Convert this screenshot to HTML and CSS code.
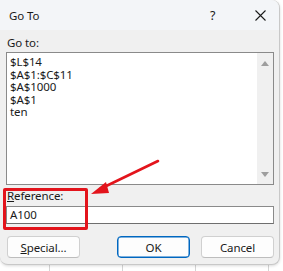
FILE: index.html
```html
<!DOCTYPE html>
<html>
<head>
<meta charset="utf-8">
<link rel="stylesheet" href="styles.css">
</head>
<body>
<div class="sheet">
  <div class="dialog">
    <div class="titlebar">
      <span class="title">Go To</span>
      <span class="help">?</span>
      <span class="close">
        <svg width="11" height="11" viewBox="0 0 11 11"><path d="M0.5 0.5 L10.5 10.5 M10.5 0.5 L0.5 10.5" stroke="#1a1a1a" stroke-width="1.1" fill="none"/></svg>
      </span>
    </div>
    <div class="content">
      <div class="label">Go to:</div>
      <div class="listbox">
        <div class="items">
          <div>$L$14</div>
          <div>$A$1:$C$11</div>
          <div>$A$1000</div>
          <div>$A$1</div>
          <div>ten</div>
        </div>
        <div class="scrollbar">
          <span class="tri up"></span>
          <span class="tri down"></span>
        </div>
      </div>
      <div class="label ref-label"><u>R</u>eference:</div>
      <div class="input">A100</div>
      <div class="buttons">
        <button class="btn"><u>S</u>pecial...</button>
        <div class="spacer"></div>
        <button class="btn primary">OK</button>
        <button class="btn">Cancel</button>
      </div>
    </div>
    <div class="highlight"></div>
    <svg class="arrow" width="80" height="50" viewBox="0 0 80 50">
      <line x1="70" y1="3" x2="12" y2="31" stroke="#e3141c" stroke-width="2.6" stroke-linecap="round"/>
      <polygon points="3,36 18,24 21,35" fill="#e3141c"/>
    </svg>
  </div>
</div>
</body>
</html>
```

FILE: styles.css
```css
* { box-sizing: border-box; }
html, body { margin: 0; padding: 0; }
body {
  width: 283px;
  height: 271px;
  overflow: hidden;
  font-family: "Segoe UI", "Noto Sans", "Open Sans", sans-serif;
  font-size: 11px;
  letter-spacing: -0.1px;
  color: #1a1a1a;
}
.sheet {
  width: 283px;
  height: 271px;
  background-color: #ffffff;
  background-image:
    repeating-linear-gradient(to right, transparent 0, transparent 49px, #d4d4d4 49px, #d4d4d4 50px, transparent 50px, transparent 73px);
  position: relative;
}
.dialog {
  position: relative;
  width: 280px;
  height: 265px;
  background: #f0f0f0;
  border: 1px solid #c8c8c8;
  border-left: none;
  border-top: none;
  border-radius: 0 8px 8px 8px;
  display: flex;
  flex-direction: column;
  box-shadow: 0 1px 3px rgba(0,0,0,0.15);
}
.titlebar {
  height: 30px;
  background: #f3f5f8;
  border-radius: 0 8px 0 0;
  display: flex;
  align-items: center;
  padding-left: 9px;
}
.title { flex: 1; font-size: 11.5px; padding-top: 1px; }
.help { width: 46px; font-size: 12.5px; text-align: left; padding-left: 1px; }
.close { width: 24px; display: flex; align-items: center; padding-top: 1px; }
.content {
  padding: 5px 5px 0 6px;
  display: flex;
  flex-direction: column;
}
.label { height: 16px; line-height: 16px; padding-left: 1px; font-size: 11.5px; }
.ref-label { margin-top: 3px; }
.listbox {
  margin-top: 1px;
  height: 133px;
  background: #ffffff;
  border: 1px solid #8a8a8a;
  display: flex;
}
.items {
  flex: 1;
  padding: 3px 0 0 3px;
  line-height: 12.6px;
  font-size: 11.5px;
}
.scrollbar {
  width: 16px;
  background: #f0f0f0;
  display: flex;
  flex-direction: column;
  justify-content: space-between;
  align-items: center;
  padding: 8px 0 7px;
}
.tri {
  width: 0; height: 0;
  border-left: 4px solid transparent;
  border-right: 4px solid transparent;
}
.tri.up { border-bottom: 5px solid #9e9e9e; }
.tri.down { border-top: 5px solid #9e9e9e; }
.input {
  margin-top: 2px;
  height: 18px;
  line-height: 16px;
  background: #ffffff;
  border: 1px solid #8a8a8a;
  border-bottom-color: #6e6e6e;
  padding-left: 3px;
  font-size: 11.5px;
}
.buttons {
  margin-top: 12px;
  display: flex;
  gap: 11px;
  padding-left: 1px;
}
.spacer { flex: 1; }
.btn {
  width: 73px;
  height: 22px;
  font-family: inherit;
  font-size: 11.5px;
  letter-spacing: -0.1px;
  color: #1a1a1a;
  background: #fdfdfd;
  border: 1px solid #d0d0d0;
  border-bottom-color: #bdbdbd;
  border-radius: 4px;
  padding: 0;
}
.btn.primary {
  border: 1px solid #0067c0;
  box-shadow: inset 0 0 0 0.5px #0067c0;
}
.highlight {
  position: absolute;
  left: 3px;
  top: 188px;
  width: 85px;
  height: 42px;
  border: 3px solid #e3141c;
  border-radius: 2px;
}
.arrow {
  position: absolute;
  left: 88px;
  top: 158px;
}
```
